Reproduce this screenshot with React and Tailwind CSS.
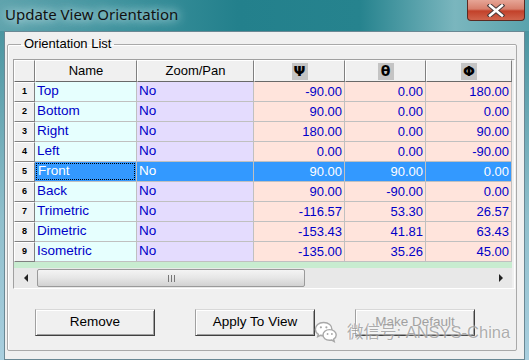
import React from 'react';

const rows = [
  ['Top', 'No', '-90.00', '0.00', '180.00'],
  ['Bottom', 'No', '90.00', '0.00', '0.00'],
  ['Right', 'No', '180.00', '0.00', '90.00'],
  ['Left', 'No', '0.00', '0.00', '-90.00'],
  ['Front', 'No', '90.00', '90.00', '0.00'],
  ['Back', 'No', '90.00', '-90.00', '0.00'],
  ['Trimetric', 'No', '-116.57', '53.30', '26.57'],
  ['Dimetric', 'No', '-153.43', '41.81', '63.43'],
  ['Isometric', 'No', '-135.00', '35.26', '45.00'],
];

const SELECTED = 4;

function HeaderCell({ children }) {
  return (
    <div className="h-[22px] flex items-center justify-center bg-[#f0f0f0] border-t border-l border-t-white border-l-white border-r border-b border-r-[#808080] border-b-[#696969] text-[13px] text-black">
      {children}
    </div>
  );
}

function Symbol({ children }) {
  return (
    <span className="w-[16px] h-[17px] flex items-center justify-center bg-[#c4c4c4] font-bold text-[14px] font-['DejaVu_Sans',sans-serif]">
      {children}
    </span>
  );
}

function Button({ children, disabled }) {
  return (
    <div
      className={
        'w-[120px] h-[27px] flex items-center justify-center bg-[#f0f0f0] border border-t-[#d8d8d8] border-l-[#a0a0a0] border-r-[#404040] border-b-[#404040] shadow-[inset_1px_1px_0_#ffffff,inset_-1px_-1px_0_#a0a0a0] text-[13.5px] ' +
        (disabled ? 'text-[#a0a0a0]' : 'text-black')
      }
    >
      {children}
    </div>
  );
}

function CloseX() {
  return (
    <svg width="18" height="13" viewBox="0 0 18 13">
      <path d="M3 1.5 L15 11.5 M15 1.5 L3 11.5" stroke="#4a3a3a" strokeWidth="4.5" strokeLinecap="square" />
      <path d="M3 1.5 L15 11.5 M15 1.5 L3 11.5" stroke="#ffffff" strokeWidth="2.5" strokeLinecap="square" />
    </svg>
  );
}

function WeChat() {
  return (
    <svg width="24" height="22" viewBox="0 0 30 28">
      <path d="M12 2 C5.5 2 1.5 6 1.5 10.5 C1.5 13.2 3 15.4 5.3 16.9 L4.4 20 L8 18.2 C9.3 18.6 10.6 18.8 12 18.8 C18.5 18.8 22.5 14.8 22.5 10.4 C22.5 6 18.5 2 12 2 Z" fill="#ffffff" stroke="#a8a8a8" strokeWidth="1.8" />
      <path d="M19.5 11 C14.5 11 11.2 14.2 11.2 17.8 C11.2 21.4 14.5 24.6 19.5 24.6 C20.5 24.6 21.4 24.4 22.3 24.2 L25.5 26 L24.7 23.2 C26.8 22 28 20 28 17.8 C28 14.2 24.6 11 19.5 11 Z" fill="#ffffff" stroke="#a8a8a8" strokeWidth="1.8" />
      <circle cx="8.5" cy="8" r="1.4" fill="#a8a8a8" />
      <circle cx="15.5" cy="8" r="1.4" fill="#a8a8a8" />
      <circle cx="17" cy="16.5" r="1.2" fill="#a8a8a8" />
      <circle cx="22.5" cy="16.5" r="1.2" fill="#a8a8a8" />
    </svg>
  );
}

export default function App() {
  return (
    <div className="w-[529px] h-[360px] overflow-hidden relative flex flex-col bg-[linear-gradient(180deg,#3f8e99_0%,#8fbfcc_60%,#a9cfdf_100%)] font-['Liberation_Sans',Arial,sans-serif]">
      {/* title bar */}
      <div className="h-[31px] shrink-0 relative flex items-start bg-[linear-gradient(90deg,#5fa3ad_0%,#3c919c_25%,#23808c_45%,#26838e_68%,#7ab6be_86%,#5aa3ad_100%)]">
        <span className="ml-[5px] mt-[4px] text-[15px] leading-[20px] text-[#111] font-['Noto_Sans',sans-serif] [text-shadow:0_0_8px_#d8eef0,0_0_14px_#b8dde2]">
          Update View Orientation
        </span>
        <div className="absolute left-[467px] top-0 w-[58px] h-[21px] rounded-b-[4px] border border-t-0 border-[#5a2a22] bg-[linear-gradient(180deg,#e6a596_0%,#d77f6c_45%,#c2412a_55%,#d0644c_100%)] flex items-center justify-center">
          <CloseX />
        </div>
      </div>

      {/* client area */}
      <div className="flex-1 mx-[4px] border border-[#6a8894] bg-[#f0f0f0] pl-[2px] pt-[4px]">
        <fieldset className="w-[510px] border border-[#a9a9a9] shadow-[inset_1px_1px_0_#ffffff] rounded-[2px] pl-[5px] pb-[14px]">
          <legend className="ml-[8px] px-[3px] text-[13px] leading-[16px] text-black">Orientation List</legend>

          {/* grid */}
          <div className="mt-[7px] w-[502px] h-[230px] border border-t-[#a0a0a0] border-l-[#a0a0a0] border-r-white border-b-white bg-[#f0f0f0]">
            <div className="w-[498px] grid grid-cols-[21px_102px_117px_91px_81px_86px]">
              <HeaderCell />
              <HeaderCell>Name</HeaderCell>
              <HeaderCell>Zoom/Pan</HeaderCell>
              <HeaderCell><Symbol>Ψ</Symbol></HeaderCell>
              <HeaderCell><Symbol>θ</Symbol></HeaderCell>
              <HeaderCell><Symbol>Φ</Symbol></HeaderCell>

              {rows.map((r, i) => {
                const sel = i === SELECTED;
                const txt = sel ? 'text-white' : 'text-[#0000c8]';
                return (
                  <React.Fragment key={r[0]}>
                    <div className="h-[20px] flex items-center justify-center bg-[#f0f0f0] border-t border-l border-t-white border-l-white border-r border-b border-r-[#808080] border-b-[#808080] text-[9px] font-bold text-black">
                      {i + 1}
                    </div>
                    <div className={'h-[20px] border-r border-b border-[#c0c0c0] text-[13.5px] ' + txt + (sel ? ' bg-[#3399ff] p-px' : ' bg-[#e6fffe]')}>
                      <div className={'h-full flex items-center pl-[1px] ' + (sel ? 'border border-dotted border-black' : 'pl-[2px]')}>{r[0]}</div>
                    </div>
                    <div className={'h-[20px] flex items-center pl-[2px] border-r border-b border-[#c0c0c0] text-[13.5px] ' + txt + (sel ? ' bg-[#3399ff]' : ' bg-[#e4dcfe]')}>
                      {r[1]}
                    </div>
                    {r.slice(2).map((v, j) => (
                      <div key={j} className={'h-[20px] flex items-center justify-end pr-[2px] border-r border-b border-[#c0c0c0] text-[13px] ' + txt + (sel ? ' bg-[#3399ff]' : ' bg-[#ffe4dc]')}>
                        {v}
                      </div>
                    ))}
                  </React.Fragment>
                );
              })}
            </div>
            <div className="w-[498px] h-[6px] bg-[#c8ecd0]" />

            {/* horizontal scrollbar */}
            <div className="w-[498px] h-[20px] flex items-center bg-[#e8e8e8]">
              <div className="w-[23px] h-full flex items-center justify-center">
                <span className="w-0 h-0 border-y-[4px] border-y-transparent border-r-[4px] border-r-[#222]" />
              </div>
              <div className="w-[268px] h-[18px] rounded-[2px] border border-[#9a9a9a] bg-[linear-gradient(180deg,#f4f4f4_0%,#e6e6e6_50%,#d2d2d2_100%)] flex items-center justify-center gap-[2px]">
                <span className="w-px h-[7px] bg-[#777]" />
                <span className="w-px h-[7px] bg-[#777]" />
                <span className="w-px h-[7px] bg-[#777]" />
              </div>
              <div className="flex-1" />
              <div className="w-[23px] h-full flex items-center justify-center">
                <span className="w-0 h-0 border-y-[4px] border-y-transparent border-l-[4px] border-l-[#222]" />
              </div>
            </div>
          </div>

          {/* buttons */}
          <div className="mt-[20px] pl-[22px] flex gap-[40px]">
            <Button>Remove</Button>
            <Button>Apply To View</Button>
            <Button disabled>Make Default</Button>
          </div>
        </fieldset>
      </div>

      {/* watermark */}
      <div className="absolute left-[314px] top-[321px] flex items-center gap-[9px] pointer-events-none">
        <WeChat />
        <span className="text-[16.5px] leading-[20px] text-[rgba(120,120,120,0.6)] font-['Liberation_Sans','Noto_Sans_CJK_SC',sans-serif] [text-shadow:0_0_2px_#ffffff]">
          微信号: ANSYS-China
        </span>
      </div>
    </div>
  );
}
